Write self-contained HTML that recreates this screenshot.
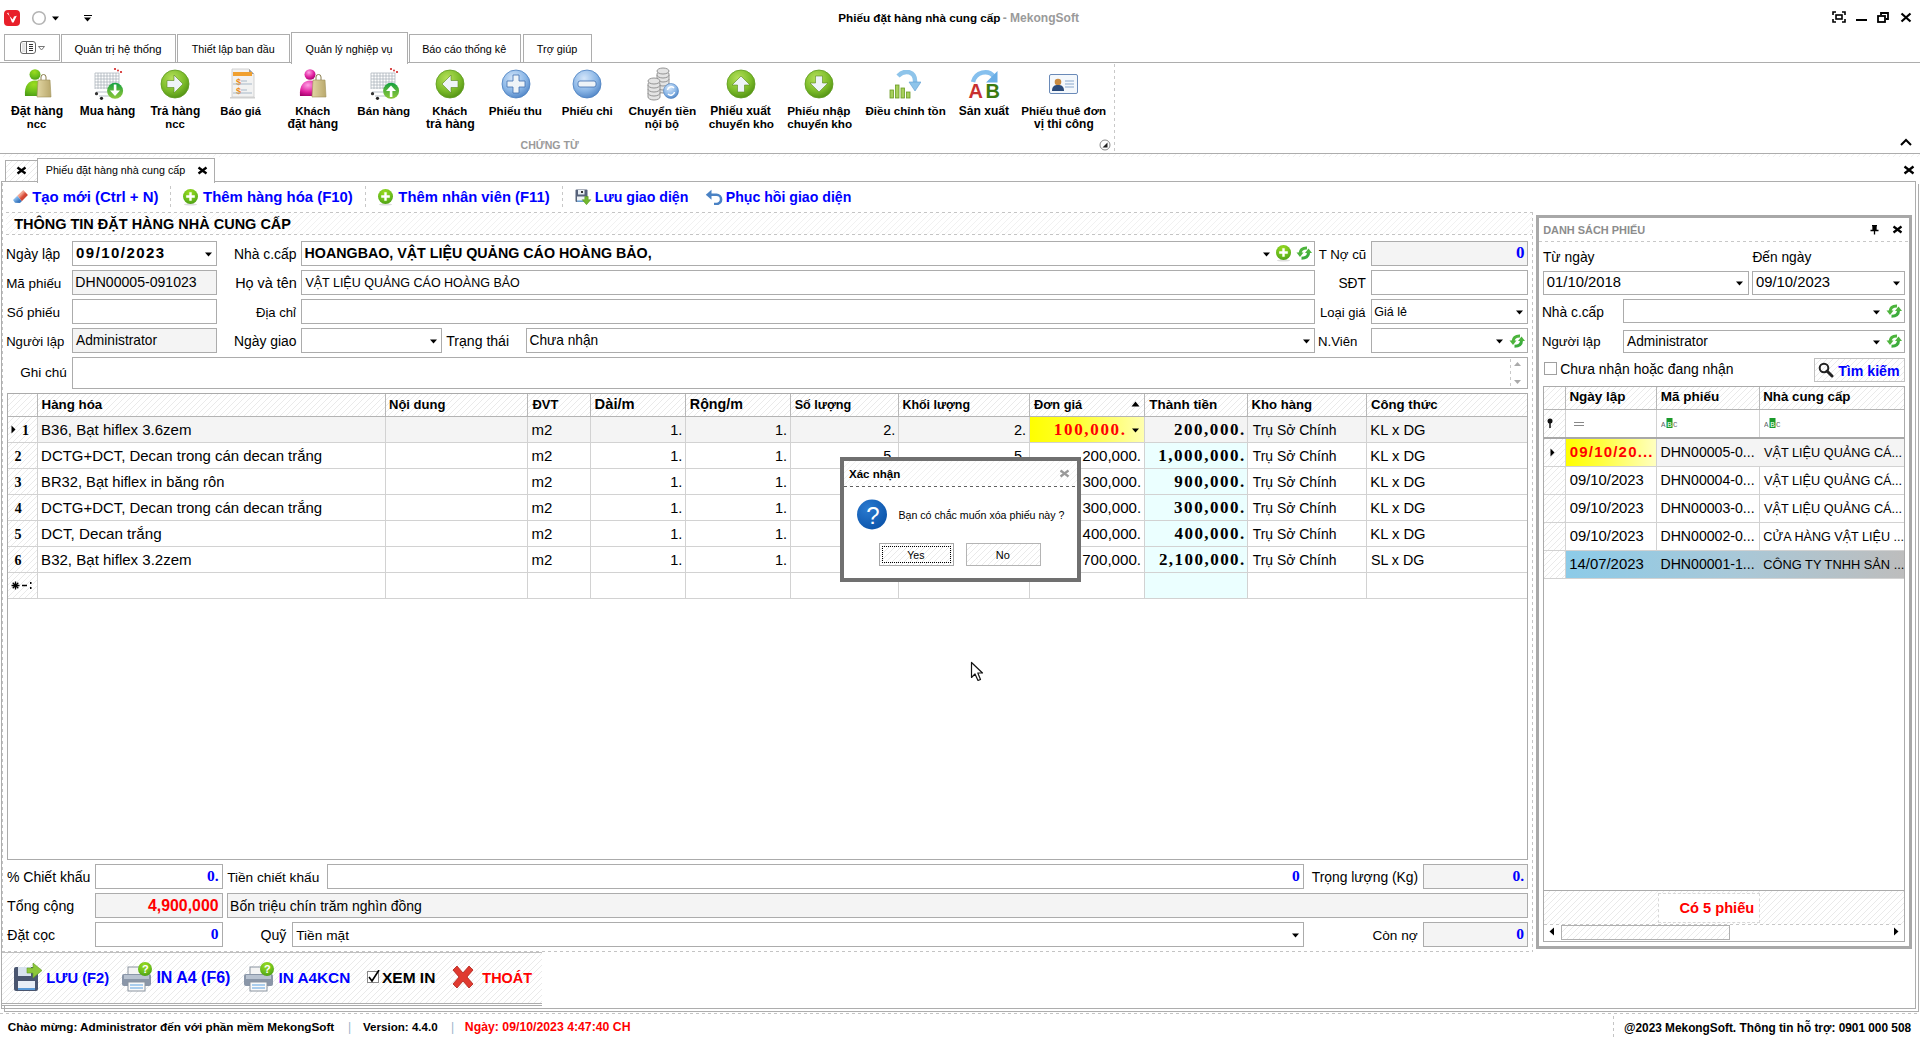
<!DOCTYPE html>
<html><head><meta charset="utf-8"><style>
html,body{margin:0;padding:0;width:1920px;height:1039px;overflow:hidden;background:#fff;}
.a{position:absolute;box-sizing:border-box;}
.t{position:absolute;white-space:pre;line-height:1;font-family:"Liberation Sans", sans-serif;}
</style></head><body>
<svg class="a" style="left:4px;top:10px;" width="16" height="16" viewBox="0 0 16 16"><rect x="0" y="0" width="16" height="16" rx="4" fill="#e8202a"/><path d="M3 3.2 L4.2 2.6 L8 12.5 L9.6 12.5 L12.8 5.8 L10 6.6 L8.7 9.6 Z" fill="#fff"/></svg>
<svg class="a" style="left:31px;top:10px;" width="17" height="17" viewBox="0 0 17 17"><circle cx="8" cy="8" r="6.3" fill="none" stroke="#b4b4b4" stroke-width="1.6"/></svg>
<svg class="a" style="left:52.0px;top:16px" width="7" height="5" viewBox="0 0 7 5"><path d="M0 0.5H7L3.5 4.5Z" fill="#000"/></svg>
<div class="a" style="left:84px;top:15px;width:8px;height:1px;background:#000;"></div>
<svg class="a" style="left:84.0px;top:17px" width="7" height="5" viewBox="0 0 7 5"><path d="M0 0.5H7L3.5 4.5Z" fill="#000"/></svg>
<svg class="a" style="left:1832px;top:11px;" width="14" height="12" viewBox="0 0 14 12"><path d="M1 4V1h3M10 1h3v3M13 8v3h-3M4 11H1V8" fill="none" stroke="#000" stroke-width="1.6"/><rect x="4" y="4" width="6" height="4" fill="none" stroke="#000" stroke-width="1.6"/></svg>
<div class="a" style="left:1856px;top:19px;width:11px;height:2px;background:#000;"></div>
<svg class="a" style="left:1877px;top:12px;" width="12" height="11" viewBox="0 0 12 11"><rect x="1" y="4" width="7" height="6" fill="none" stroke="#000" stroke-width="1.8"/><path d="M4 3V1h7v6H9" fill="none" stroke="#000" stroke-width="1.8"/></svg>
<svg class="a" style="left:1900px;top:12px;" width="12" height="11" viewBox="0 0 12 11"><path d="M1.5 1.5L10.5 9.5M10.5 1.5L1.5 9.5" stroke="#000" stroke-width="2.2"/></svg>
<div class="a" style="left:4px;top:34px;width:56px;height:27px;border:1px solid #adadad;"></div>
<svg class="a" style="left:20px;top:41px;" width="26" height="14" viewBox="0 0 26 14"><rect x="0.5" y="0.5" width="15" height="12" rx="2.5" fill="#fff" stroke="#666"/><rect x="2" y="2" width="3.5" height="9" fill="#e4e4e4"/><line x1="6.5" y1="1" x2="6.5" y2="12" stroke="#666"/><path d="M9 3.5h4M9 5.5h4M9 7.5h4M9 9.5h4" stroke="#333" stroke-width="1"/><path d="M18.5 5.5h6l-3 3.5z" fill="none" stroke="#777"/></svg>
<div class="a" style="left:0px;top:62px;width:291px;height:1px;background:#adadad;"></div>
<div class="a" style="left:408px;top:62px;width:1512px;height:1px;background:#adadad;"></div>
<div class="a" style="left:61px;top:34px;width:115px;height:29px;border:1px solid #adadad;border-bottom:none;"></div>
<div class="a" style="left:177px;top:34px;width:113px;height:29px;border:1px solid #adadad;border-bottom:none;"></div>
<div class="a" style="left:409px;top:34px;width:112px;height:29px;border:1px solid #adadad;border-bottom:none;"></div>
<div class="a" style="left:523px;top:34px;width:69px;height:29px;border:1px solid #adadad;border-bottom:none;"></div>
<div class="a" style="left:291px;top:32px;width:117px;height:32px;background:#fff;border:1px solid #adadad;border-bottom:none;"></div>
<svg width="0" height="0" style="position:absolute"><defs>
<radialGradient id="gG" cx="40%" cy="30%" r="75%"><stop offset="0" stop-color="#b5e05a"/><stop offset="0.6" stop-color="#7cbc2a"/><stop offset="1" stop-color="#4f8e12"/></radialGradient>
<radialGradient id="gB" cx="40%" cy="30%" r="75%"><stop offset="0" stop-color="#d4e6fa"/><stop offset="0.6" stop-color="#8ab6e6"/><stop offset="1" stop-color="#4d82c4"/></radialGradient>
<radialGradient id="gGreenP" cx="45%" cy="25%" r="80%"><stop offset="0" stop-color="#9cdc20"/><stop offset="0.6" stop-color="#6cbe1c"/><stop offset="1" stop-color="#4a9a14"/></radialGradient>
<radialGradient id="gPink" cx="40%" cy="30%" r="75%"><stop offset="0" stop-color="#ffa0e6"/><stop offset="0.6" stop-color="#e0209e"/><stop offset="1" stop-color="#a0006a"/></radialGradient>
<linearGradient id="gBag" x1="0" y1="0" x2="1" y2="0"><stop offset="0" stop-color="#e2d6a4"/><stop offset="1" stop-color="#b9a86c"/></linearGradient>
<linearGradient id="gCart" x1="0" y1="0" x2="0" y2="1"><stop offset="0" stop-color="#10a040"/><stop offset="0.5" stop-color="#5ab43a"/><stop offset="1" stop-color="#8cc83a"/></linearGradient>
<linearGradient id="gCyan" x1="0" y1="0" x2="1" y2="0"><stop offset="0" stop-color="#ffff00"/><stop offset="1" stop-color="#ffffc0"/></linearGradient>
</defs></svg>
<svg class="a" style="left:24px;top:69px;" width="28" height="29" viewBox="0 0 28 29"><ellipse cx="11" cy="5.5" rx="5.5" ry="5.2" fill="url(#gGreenP)"/>
<path d="M1 27 C0 16 5 11.5 11 11.5 C17 11.5 21 16 21 27 Z" fill="url(#gGreenP)"/>
<path d="M14 11h12l1 17H13z" fill="url(#gBag)" stroke="#a0925a" stroke-width="0.6"/>
<path d="M17 11 v-3 a2.5 2.5 0 0 1 5 0 v3" fill="none" stroke="#8a7c4c" stroke-width="1"/></svg>
<svg class="a" style="left:94px;top:66px;" width="30" height="34" viewBox="0 0 30 34"><g fill="none" stroke="#a4aeb6" stroke-width="0.7"><path d="M1 7V23"/><path d="M4 7V23"/><path d="M7 7V23"/><path d="M10 7V23"/><path d="M13 7V23"/><path d="M16 7V23"/><path d="M19 7V23"/><path d="M22 7V23"/><path d="M25 7V23"/><path d="M1 7H25"/><path d="M1 10H25"/><path d="M1 13H25"/><path d="M1 16H25"/><path d="M1 19H25"/><path d="M1 22H25"/></g><path d="M2 26h12M5 30h10" stroke="#b8c0c8" stroke-width="1"/><circle cx="2.5" cy="27.7" r="1.6" fill="#333"/><circle cx="7.5" cy="32.3" r="1.6" fill="#222"/><circle cx="21" cy="3" r="1.1" fill="#d02020"/><circle cx="24" cy="4.5" r="0.9" fill="#d02020"/><circle cx="27" cy="6" r="1.1" fill="#d02020"/><circle cx="21.1" cy="24.8" r="8" fill="url(#gCart)"/><path d="M19.8 18.5h2.6v6h3.6l-5 5.5-5-5.5h3.8z" fill="#fff"/></svg>
<svg class="a" style="left:160px;top:69px;" width="30" height="30" viewBox="0 0 30 30"><circle cx="15" cy="15" r="14" fill="url(#gG)" stroke="#5e9a1e" stroke-width="0.8"/><path d="M7 11.5h7v-5.5l9 9-9 9v-5.5h-7z" fill="#eef4f8" stroke="#58861e" stroke-width="0.6"/></svg>
<svg class="a" style="left:230px;top:68px;" width="25" height="31" viewBox="0 0 25 31"><path d="M2 1h17l5 5v23H2z" fill="#f2f2f2" stroke="#c8c8c8" stroke-width="0.8"/>
<path d="M19 1v5h5z" fill="#9a9a9a"/><rect x="3" y="4" width="19" height="4" fill="#f0a030"/>
<text x="6" y="17" font-size="9" font-family="Liberation Sans" font-weight="bold" fill="#f08a10">$</text>
<text x="6" y="26" font-size="9" font-family="Liberation Sans" font-weight="bold" fill="#f08a10">$</text>
<path d="M11 13h6M3 16h19M11 22h6M3 25h19" stroke="#a8b8c8" stroke-width="1"/>
<rect x="0" y="29" width="25" height="1.5" fill="#d0d0d0"/></svg>
<svg class="a" style="left:299px;top:69px;" width="28" height="29" viewBox="0 0 28 29"><ellipse cx="11" cy="5.5" rx="5.5" ry="5.2" fill="url(#gPink)"/>
<path d="M1 27 C0 16 5 11.5 11 11.5 C17 11.5 21 16 21 27 Z" fill="url(#gPink)"/>
<path d="M14 11h12l1 17H13z" fill="url(#gBag)" stroke="#a0925a" stroke-width="0.6"/>
<path d="M17 11 v-3 a2.5 2.5 0 0 1 5 0 v3" fill="none" stroke="#8a7c4c" stroke-width="1"/></svg>
<svg class="a" style="left:370px;top:66px;" width="30" height="34" viewBox="0 0 30 34"><g fill="none" stroke="#a4aeb6" stroke-width="0.7"><path d="M1 7V23"/><path d="M4 7V23"/><path d="M7 7V23"/><path d="M10 7V23"/><path d="M13 7V23"/><path d="M16 7V23"/><path d="M19 7V23"/><path d="M22 7V23"/><path d="M25 7V23"/><path d="M1 7H25"/><path d="M1 10H25"/><path d="M1 13H25"/><path d="M1 16H25"/><path d="M1 19H25"/><path d="M1 22H25"/></g><path d="M2 26h12M5 30h10" stroke="#b8c0c8" stroke-width="1"/><circle cx="2.5" cy="27.7" r="1.6" fill="#333"/><circle cx="7.5" cy="32.3" r="1.6" fill="#222"/><circle cx="21" cy="3" r="1.1" fill="#d02020"/><circle cx="24" cy="4.5" r="0.9" fill="#d02020"/><circle cx="27" cy="6" r="1.1" fill="#d02020"/><circle cx="21.1" cy="24.8" r="8" fill="url(#gCart)"/><path d="M19.8 31h2.6v-6h3.6l-5-5.5-5 5.5h3.8z" fill="#fff"/></svg>
<svg class="a" style="left:435px;top:69px;" width="30" height="30" viewBox="0 0 30 30"><circle cx="15" cy="15" r="14" fill="url(#gG)" stroke="#5e9a1e" stroke-width="0.8"/><path d="M23 11.5h-7v-5.5l-9 9 9 9v-5.5h7z" fill="#eef4f8" stroke="#58861e" stroke-width="0.6"/></svg>
<svg class="a" style="left:501px;top:69px;" width="30" height="30" viewBox="0 0 30 30"><circle cx="15" cy="15" r="14" fill="url(#gB)" stroke="#4a7fbf" stroke-width="0.8"/><path d="M12 6h6v6h6v6h-6v6h-6v-6h-6v-6h6z" fill="#eef4f8" stroke="#3f6fae" stroke-width="0.8"/></svg>
<svg class="a" style="left:572px;top:69px;" width="30" height="30" viewBox="0 0 30 30"><circle cx="15" cy="15" r="14" fill="url(#gB)" stroke="#4a7fbf" stroke-width="0.8"/><rect x="6" y="12" width="18" height="6" rx="2" fill="#eef4f8" stroke="#3f6fae" stroke-width="0.8"/></svg>
<svg class="a" style="left:646px;top:67px;" width="33" height="34" viewBox="0 0 33 34"><g fill="#e4e4e4" stroke="#8a8a8a" stroke-width="0.9">
<rect x="11" y="4" width="12" height="22" rx="6" ry="3"/><path d="M11 8a6 3 0 0 0 12 0M11 12a6 3 0 0 0 12 0M11 16a6 3 0 0 0 12 0M11 20a6 3 0 0 0 12 0"/>
<ellipse cx="17" cy="4" rx="6" ry="3"/>
<rect x="2" y="14" width="12" height="19" rx="6" ry="3"/><path d="M2 18a6 3 0 0 0 12 0M2 22a6 3 0 0 0 12 0M2 26a6 3 0 0 0 12 0"/>
<ellipse cx="8" cy="14" rx="6" ry="3"/></g>
<circle cx="25" cy="24" r="7.5" fill="url(#gB)" stroke="#4a7fbf" stroke-width="0.6"/>
<path d="M21.5 23a3.8 3.8 0 0 1 6.5-2M28.5 25a3.8 3.8 0 0 1-6.5 2" fill="none" stroke="#fff" stroke-width="1.5"/></svg>
<svg class="a" style="left:726px;top:69px;" width="30" height="30" viewBox="0 0 30 30"><circle cx="15" cy="15" r="14" fill="url(#gG)" stroke="#5e9a1e" stroke-width="0.8"/><path d="M11.5 23v-7h-5.5l9-9 9 9h-5.5v7z" fill="#eef4f8" stroke="#58861e" stroke-width="0.6"/></svg>
<svg class="a" style="left:804px;top:69px;" width="30" height="30" viewBox="0 0 30 30"><circle cx="15" cy="15" r="14" fill="url(#gG)" stroke="#5e9a1e" stroke-width="0.8"/><path d="M11.5 7v7h-5.5l9 9 9-9h-5.5v-7z" fill="#eef4f8" stroke="#58861e" stroke-width="0.6"/></svg>
<svg class="a" style="left:889px;top:70px;" width="32" height="29" viewBox="0 0 32 29"><g fill="#a6d05a" stroke="#6a9a24" stroke-width="0.8"><rect x="1" y="20" width="3.5" height="8"/><rect x="6.5" y="15" width="3.5" height="13"/><rect x="12" y="18" width="3.5" height="10"/><rect x="17.5" y="22" width="3.5" height="6"/></g>
<path d="M9 6 C16 -1 27 1 26 13" fill="none" stroke="#8ec4ea" stroke-width="4.5"/>
<path d="M20 12h12l-6 9z" fill="#8ec4ea" stroke="#5a9ad0" stroke-width="0.6"/></svg>
<svg class="a" style="left:967px;top:68px;" width="35" height="32" viewBox="0 0 35 32"><path d="M6 14 C8.5 4 21 1 27 8.5" fill="none" stroke="#86c0ee" stroke-width="4.5"/><path d="M30.5 3 L30.5 14.5 L19 14.5 Z" fill="#6aaee6"/>
<text x="1.5" y="30" font-size="20" font-family="Liberation Sans" font-weight="bold" fill="#c83030">A</text>
<text x="18.5" y="30" font-size="20" font-family="Liberation Sans" font-weight="bold" fill="#3a7a10">B</text></svg>
<svg class="a" style="left:1049px;top:74px;" width="30" height="21" viewBox="0 0 30 21"><rect x="0.5" y="0.5" width="28" height="19" rx="1.5" fill="#f4f8fc" stroke="#6a8ab8" stroke-width="1"/>
<circle cx="9" cy="8" r="3.3" fill="#c88a40"/><path d="M3 17c0-5 2.5-6 6-6s6 1 6 6z" fill="#2a4a7a"/>
<path d="M16 7h9M16 10h9M16 13h9" stroke="#8aa8cc" stroke-width="1"/></svg>
<div class="a" style="left:1114px;top:64px;width:1px;height:89px;background:repeating-linear-gradient(180deg,#c8c8c8 0 3px,transparent 3px 6px);"></div>
<svg class="a" style="left:1099px;top:139px;" width="12" height="12" viewBox="0 0 12 12"><circle cx="6" cy="6" r="5" fill="#fff" stroke="#8a8a8a"/><path d="M3.5 8.5h5v-5z" fill="#222"/></svg>
<svg class="a" style="left:1899px;top:138px;" width="14" height="10" viewBox="0 0 14 10"><path d="M2 7l5-5 5 5" fill="none" stroke="#000" stroke-width="2"/></svg>
<div class="a" style="left:0px;top:153px;width:1920px;height:1px;background:#adadad;"></div>
<div class="a" style="left:0px;top:154px;width:1920px;height:3px;background:repeating-linear-gradient(135deg,#ffffff 0px,#ffffff 3.536px,#f1f1f1 3.536px,#f1f1f1 4.243px);"></div>
<div class="a" style="left:5px;top:160px;width:33px;height:22px;background:repeating-linear-gradient(135deg,#ffffff 0px,#ffffff 3.536px,#eaeaea 3.536px,#eaeaea 4.243px);border:1px solid #adadad;"></div>
<svg class="a" style="left:16px;top:166px;" width="11" height="9" viewBox="0 0 11 9"><path d="M1.5 1.5L9.5 7.5M9.5 1.5L1.5 7.5" stroke="#000" stroke-width="2.3"/></svg>
<div class="a" style="left:37px;top:158px;width:178px;height:25px;background:#fff;border:1px solid #adadad;border-bottom:none;"></div>
<svg class="a" style="left:197px;top:166px;" width="11" height="9" viewBox="0 0 11 9"><path d="M1.5 1.5L9.5 7.5M9.5 1.5L1.5 7.5" stroke="#000" stroke-width="2.3"/></svg>
<svg class="a" style="left:1903px;top:165px;" width="12" height="10" viewBox="0 0 12 10"><path d="M1.5 1.5L10.5 8.5M10.5 1.5L1.5 8.5" stroke="#000" stroke-width="2.3"/></svg>
<div class="a" style="left:1px;top:181px;width:5px;height:1px;background:#adadad;"></div>
<div class="a" style="left:214px;top:181px;width:1702px;height:1px;background:#adadad;"></div>
<div class="a" style="left:1px;top:181px;width:1px;height:828px;background:#adadad;"></div>
<div class="a" style="left:1915px;top:181px;width:1px;height:828px;background:#adadad;"></div>
<div class="a" style="left:1px;top:1008px;width:1915px;height:1px;background:#adadad;"></div>
<div class="a" style="left:1918px;top:184px;width:1px;height:828px;background:#adadad;"></div>
<div class="a" style="left:4px;top:1011px;width:1915px;height:1px;background:#adadad;"></div>
<div class="a" style="left:4px;top:1005px;width:1px;height:7px;background:#adadad;"></div>
<svg class="a" style="left:12px;top:189px;" width="18" height="16" viewBox="0 0 18 16"><defs><linearGradient id="gEr" x1="0" y1="0" x2="1" y2="1"><stop offset="0.35" stop-color="#f2a894"/><stop offset="0.55" stop-color="#d84a36"/><stop offset="1" stop-color="#b83020"/></linearGradient><linearGradient id="gEb" x1="0" y1="0" x2="1" y2="1"><stop offset="0.3" stop-color="#8cc0f0"/><stop offset="0.7" stop-color="#3a78c0"/></linearGradient></defs><path d="M11.3 1 L15.9 5.9 L9.8 12.3 L5.3 6.7 Z" fill="url(#gEr)"/><path d="M5.3 6.7 L9.8 12.3 L7.9 14 L3 13.7 L1 11 Z" fill="url(#gEb)"/></svg>
<div class="a" style="left:170px;top:186px;width:1px;height:23px;background:repeating-linear-gradient(180deg,#c8c8c8 0 3px,transparent 3px 6px);"></div>
<svg class="a" style="left:183px;top:189px;" width="16" height="17" viewBox="0 0 16 17"><ellipse cx="7.5" cy="15.5" rx="6.5" ry="1" fill="#ddd"/><circle cx="7.5" cy="7.5" r="7.5" fill="url(#gGreenP)"/><path d="M6.3 3.2h2.4v3.1h3.1v2.4h-3.1v3.1h-2.4v-3.1h-3.1v-2.4h3.1z" fill="#fff"/></svg>
<div class="a" style="left:365px;top:186px;width:1px;height:23px;background:repeating-linear-gradient(180deg,#c8c8c8 0 3px,transparent 3px 6px);"></div>
<svg class="a" style="left:378px;top:189px;" width="16" height="17" viewBox="0 0 16 17"><ellipse cx="7.5" cy="15.5" rx="6.5" ry="1" fill="#ddd"/><circle cx="7.5" cy="7.5" r="7.5" fill="url(#gGreenP)"/><path d="M6.3 3.2h2.4v3.1h3.1v2.4h-3.1v3.1h-2.4v-3.1h-3.1v-2.4h3.1z" fill="#fff"/></svg>
<div class="a" style="left:562px;top:186px;width:1px;height:23px;background:repeating-linear-gradient(180deg,#c8c8c8 0 3px,transparent 3px 6px);"></div>
<svg class="a" style="left:575px;top:189px;" width="17" height="16" viewBox="0 0 17 16"><rect x="0.5" y="0.5" width="12" height="12.5" rx="1" fill="#56627a"/><rect x="3" y="1" width="6.5" height="4.5" fill="#e8eef4"/><rect x="6" y="2" width="2" height="2" fill="#333"/><rect x="2" y="7.5" width="9" height="5" fill="#eef2f6"/><rect x="2" y="11.5" width="9" height="1.2" fill="#5a9ad8"/><path d="M9.8 7.5h3.4v3.2h2.6l-4.3 5-4.3-5h2.6z" fill="#72b82e" stroke="#4e8e1a" stroke-width="0.5"/></svg>
<svg class="a" style="left:705px;top:189px;" width="18" height="16" viewBox="0 0 18 16"><path d="M0.8 5.8 L6.5 0.8 L6.5 10.8 Z" fill="#4a82c4"/><path d="M5.5 5.8 H11.5 A4.6 4.6 0 0 1 11.5 15 H9" fill="none" stroke="#4a82c4" stroke-width="2.6"/></svg>
<div class="a" style="left:6px;top:213px;width:1526px;height:21px;background:repeating-linear-gradient(135deg,#ffffff 0px,#ffffff 3.536px,#f1f1f1 3.536px,#f1f1f1 4.243px);"></div>
<div class="a" style="left:6px;top:212px;width:1526px;height:1px;background:repeating-linear-gradient(90deg,#c4c4c4 0 3px,transparent 3px 6px);"></div>
<div class="a" style="left:6px;top:234px;width:1526px;height:1px;background:repeating-linear-gradient(90deg,#c4c4c4 0 3px,transparent 3px 6px);"></div>
<div class="a" style="left:1532px;top:212px;width:1px;height:740px;background:repeating-linear-gradient(180deg,#c4c4c4 0 3px,transparent 3px 6px);"></div>
<div class="a" style="left:2px;top:183px;width:1px;height:769px;background:repeating-linear-gradient(180deg,#c4c4c4 0 3px,transparent 3px 6px);"></div>
<div class="a" style="left:72px;top:241px;width:145px;height:25px;background:#fff;border:1px solid #acacac;"></div>
<svg class="a" style="left:205.0px;top:252px" width="7" height="5" viewBox="0 0 7 5"><path d="M0 0.5H7L3.5 4.5Z" fill="#000"/></svg>
<div class="a" style="left:72px;top:270px;width:145px;height:25px;background:#f4f4f4;border:1px solid #acacac;"></div>
<div class="a" style="left:72px;top:299px;width:145px;height:25px;background:#fff;border:1px solid #acacac;"></div>
<div class="a" style="left:72px;top:328px;width:145px;height:25px;background:#f4f4f4;border:1px solid #acacac;"></div>
<div class="a" style="left:72px;top:357px;width:1456px;height:32px;background:#fff;border:1px solid #acacac;"></div>
<div class="a" style="left:1510px;top:359px;width:1px;height:28px;background:repeating-linear-gradient(180deg,#c8c8c8 0 3px,transparent 3px 6px);"></div>
<svg class="a" style="left:1513px;top:361px;" width="9" height="24" viewBox="0 0 9 24"><path d="M1 5h7l-3.5-4z" fill="#aaa"/><path d="M1 19h7l-3.5 4z" fill="#aaa"/></svg>
<div class="a" style="left:301px;top:241px;width:1014px;height:25px;background:#fff;border:1px solid #acacac;"></div>
<svg class="a" style="left:1262.5px;top:252px" width="7" height="5" viewBox="0 0 7 5"><path d="M0 0.5H7L3.5 4.5Z" fill="#000"/></svg>
<svg class="a" style="left:1276px;top:245px;" width="16" height="17" viewBox="0 0 16 17"><ellipse cx="7.5" cy="15.5" rx="6.5" ry="1" fill="#ddd"/><circle cx="7.5" cy="7.5" r="7.5" fill="url(#gGreenP)"/><path d="M6.3 3.2h2.4v3.1h3.1v2.4h-3.1v3.1h-2.4v-3.1h-3.1v-2.4h3.1z" fill="#fff"/></svg>
<svg class="a" style="left:1296px;top:246px;" width="17" height="14" viewBox="0 0 17 14"><path d="M11 2 Q4.5 1.8 4 7.5" fill="none" stroke="#4cb43c" stroke-width="3"/><path d="M0.5 6.5h7l-3.5 4.5z" fill="#4cb43c"/><path d="M12.5 6.5 Q12.5 12.2 5.5 12.2" fill="none" stroke="#3cac3c" stroke-width="3"/><path d="M9 7h7l-3.5-4.5z" fill="#4cb43c"/></svg>
<div class="a" style="left:301px;top:270px;width:1014px;height:25px;background:#fff;border:1px solid #acacac;"></div>
<div class="a" style="left:301px;top:299px;width:1014px;height:25px;background:#fff;border:1px solid #acacac;"></div>
<div class="a" style="left:301px;top:328px;width:141px;height:25px;background:#fff;border:1px solid #acacac;"></div>
<svg class="a" style="left:430.0px;top:339px" width="7" height="5" viewBox="0 0 7 5"><path d="M0 0.5H7L3.5 4.5Z" fill="#000"/></svg>
<div class="a" style="left:526px;top:328px;width:789px;height:25px;background:#fff;border:1px solid #acacac;"></div>
<svg class="a" style="left:1302.5px;top:339px" width="7" height="5" viewBox="0 0 7 5"><path d="M0 0.5H7L3.5 4.5Z" fill="#000"/></svg>
<div class="a" style="left:1371px;top:241px;width:157px;height:25px;background:#f4f4f4;border:1px solid #acacac;"></div>
<div class="a" style="left:1371px;top:270px;width:157px;height:25px;background:#fff;border:1px solid #acacac;"></div>
<div class="a" style="left:1371px;top:299px;width:157px;height:25px;background:#fff;border:1px solid #acacac;"></div>
<svg class="a" style="left:1516.0px;top:310px" width="7" height="5" viewBox="0 0 7 5"><path d="M0 0.5H7L3.5 4.5Z" fill="#000"/></svg>
<div class="a" style="left:1371px;top:328px;width:157px;height:25px;background:#fff;border:1px solid #acacac;"></div>
<svg class="a" style="left:1496.0px;top:339px" width="7" height="5" viewBox="0 0 7 5"><path d="M0 0.5H7L3.5 4.5Z" fill="#000"/></svg>
<svg class="a" style="left:1509px;top:334px;" width="17" height="14" viewBox="0 0 17 14"><path d="M11 2 Q4.5 1.8 4 7.5" fill="none" stroke="#4cb43c" stroke-width="3"/><path d="M0.5 6.5h7l-3.5 4.5z" fill="#4cb43c"/><path d="M12.5 6.5 Q12.5 12.2 5.5 12.2" fill="none" stroke="#3cac3c" stroke-width="3"/><path d="M9 7h7l-3.5-4.5z" fill="#4cb43c"/></svg>
<div class="a" style="left:7px;top:393px;width:1521px;height:467px;background:#fff;border:1px solid #ababab;"></div>
<div class="a" style="left:8px;top:394px;width:1519px;height:22px;background:repeating-linear-gradient(135deg,#ffffff 0px,#ffffff 3.536px,#eaeaea 3.536px,#eaeaea 4.243px);"></div>
<div class="a" style="left:8px;top:417px;width:29px;height:182px;background:repeating-linear-gradient(135deg,#ffffff 0px,#ffffff 3.536px,#eaeaea 3.536px,#eaeaea 4.243px);"></div>
<div class="a" style="left:38px;top:417px;width:1489px;height:25px;background:#f4f4f4;"></div>
<div class="a" style="left:1145px;top:443px;width:102px;height:156px;background:#ebffff;"></div>
<div class="a" style="left:1030px;top:417px;width:114px;height:25px;background:linear-gradient(90deg,#ffff00 0%,#ffff30 40%,#ffffb0 100%);"></div>
<div class="a" style="left:37px;top:394px;width:1px;height:22px;background:#b8b8b8;"></div>
<div class="a" style="left:37px;top:417px;width:1px;height:182px;background:#d2d2d2;"></div>
<div class="a" style="left:385px;top:394px;width:1px;height:22px;background:#b8b8b8;"></div>
<div class="a" style="left:385px;top:417px;width:1px;height:182px;background:#d2d2d2;"></div>
<div class="a" style="left:527px;top:394px;width:1px;height:22px;background:#b8b8b8;"></div>
<div class="a" style="left:527px;top:417px;width:1px;height:182px;background:#d2d2d2;"></div>
<div class="a" style="left:590px;top:394px;width:1px;height:22px;background:#b8b8b8;"></div>
<div class="a" style="left:590px;top:417px;width:1px;height:182px;background:#d2d2d2;"></div>
<div class="a" style="left:685px;top:394px;width:1px;height:22px;background:#b8b8b8;"></div>
<div class="a" style="left:685px;top:417px;width:1px;height:182px;background:#d2d2d2;"></div>
<div class="a" style="left:790px;top:394px;width:1px;height:22px;background:#b8b8b8;"></div>
<div class="a" style="left:790px;top:417px;width:1px;height:182px;background:#d2d2d2;"></div>
<div class="a" style="left:898px;top:394px;width:1px;height:22px;background:#b8b8b8;"></div>
<div class="a" style="left:898px;top:417px;width:1px;height:182px;background:#d2d2d2;"></div>
<div class="a" style="left:1029px;top:394px;width:1px;height:22px;background:#b8b8b8;"></div>
<div class="a" style="left:1029px;top:417px;width:1px;height:182px;background:#d2d2d2;"></div>
<div class="a" style="left:1144px;top:394px;width:1px;height:22px;background:#b8b8b8;"></div>
<div class="a" style="left:1144px;top:417px;width:1px;height:182px;background:#d2d2d2;"></div>
<div class="a" style="left:1247px;top:394px;width:1px;height:22px;background:#b8b8b8;"></div>
<div class="a" style="left:1247px;top:417px;width:1px;height:182px;background:#d2d2d2;"></div>
<div class="a" style="left:1366px;top:394px;width:1px;height:22px;background:#b8b8b8;"></div>
<div class="a" style="left:1366px;top:417px;width:1px;height:182px;background:#d2d2d2;"></div>
<div class="a" style="left:8px;top:416px;width:1519px;height:1px;background:#b4b4b4;"></div>
<div class="a" style="left:8px;top:442px;width:1519px;height:1px;background:#d2d2d2;"></div>
<div class="a" style="left:8px;top:468px;width:1519px;height:1px;background:#d2d2d2;"></div>
<div class="a" style="left:8px;top:494px;width:1519px;height:1px;background:#d2d2d2;"></div>
<div class="a" style="left:8px;top:520px;width:1519px;height:1px;background:#d2d2d2;"></div>
<div class="a" style="left:8px;top:546px;width:1519px;height:1px;background:#d2d2d2;"></div>
<div class="a" style="left:8px;top:572px;width:1519px;height:1px;background:#d2d2d2;"></div>
<div class="a" style="left:8px;top:598px;width:1519px;height:1px;background:#d2d2d2;"></div>
<svg class="a" style="left:1131px;top:401px;" width="9" height="6" viewBox="0 0 9 6"><path d="M0.5 5.5h8l-4-5z" fill="#000"/></svg>
<svg class="a" style="left:1132.0px;top:428px" width="7" height="5" viewBox="0 0 7 5"><path d="M0 0.5H7L3.5 4.5Z" fill="#000"/></svg>
<svg class="a" style="left:11px;top:425px;" width="5" height="9" viewBox="0 0 5 9"><path d="M0.5 0.5v8l4-4z" fill="#000"/></svg>
<svg class="a" style="left:11px;top:581px;" width="25" height="10" viewBox="0 0 25 10"><path d="M4.5 0.5v8M0.5 4.5h8M1.7 1.7l5.6 5.6M7.3 1.7l-5.6 5.6" stroke="#000" stroke-width="1.3"/><path d="M11 4.5h5" stroke="#000" stroke-width="1.5"/><rect x="19" y="1" width="1.5" height="2" fill="#000"/><rect x="19" y="6" width="1.5" height="2" fill="#000"/></svg>
<div class="a" style="left:95px;top:864px;width:128px;height:25px;background:#fff;border:1px solid #acacac;"></div>
<div class="a" style="left:327px;top:864px;width:977px;height:25px;background:#fff;border:1px solid #acacac;"></div>
<div class="a" style="left:1423px;top:864px;width:105px;height:25px;background:#f4f4f4;border:1px solid #acacac;"></div>
<div class="a" style="left:95px;top:893px;width:128px;height:25px;background:#f4f4f4;border:1px solid #acacac;"></div>
<div class="a" style="left:227px;top:893px;width:1301px;height:25px;background:#f4f4f4;border:1px solid #acacac;"></div>
<div class="a" style="left:95px;top:922px;width:128px;height:25px;background:#fff;border:1px solid #acacac;"></div>
<div class="a" style="left:292px;top:922px;width:1012px;height:25px;background:#fff;border:1px solid #acacac;"></div>
<svg class="a" style="left:1291.5px;top:933px" width="7" height="5" viewBox="0 0 7 5"><path d="M0 0.5H7L3.5 4.5Z" fill="#000"/></svg>
<div class="a" style="left:1423px;top:922px;width:105px;height:25px;background:#f4f4f4;border:1px solid #acacac;"></div>
<div class="a" style="left:2px;top:951px;width:1530px;height:1px;background:repeating-linear-gradient(90deg,#c4c4c4 0 3px,transparent 3px 6px);"></div>
<div class="a" style="left:2px;top:953px;width:540px;height:51px;background:repeating-linear-gradient(135deg,#ffffff 0px,#ffffff 3.536px,#eaeaea 3.536px,#eaeaea 4.243px);"></div>
<div class="a" style="left:2px;top:1003px;width:540px;height:1px;background:#adadad;"></div>
<div class="a" style="left:2px;top:1005px;width:540px;height:1px;background:#adadad;"></div>
<div class="a" style="left:2px;top:952px;width:540px;height:1px;background:#c0c0c0;"></div>
<svg class="a" style="left:13px;top:962px;" width="31" height="30" viewBox="0 0 31 30"><rect x="1" y="5" width="24" height="24" rx="2" fill="#4a5670"/><rect x="5" y="5" width="13" height="9" fill="#d8e2ee"/><rect x="5" y="19" width="17" height="9" fill="#e8eef6"/><rect x="5" y="26" width="17" height="2" fill="#5a9ad8"/><path d="M14 6h6v-5l9 7.5-9 7.5v-5h-6z" fill="#8cc63a" stroke="#5e9a1e" stroke-width="0.6"/></svg>
<svg class="a" style="left:121px;top:961px;" width="32" height="31" viewBox="0 0 32 31"><rect x="7" y="6" width="17" height="9" fill="#f4f4f4" stroke="#8a94a0"/><rect x="1" y="13" width="29" height="12" rx="2" fill="#8a96a8"/><rect x="3" y="14" width="25" height="4" fill="#b8c2d0"/><rect x="7" y="21" width="17" height="9" fill="#fafafa" stroke="#8a94a0"/><path d="M9 24h13M9 27h13" stroke="#5aa0e0"/><circle cx="24" cy="8" r="7" fill="url(#gGreenP)"/><text x="21" y="12" font-size="11" font-family="Liberation Sans" font-weight="bold" fill="#fff">?</text></svg>
<svg class="a" style="left:243px;top:961px;" width="32" height="31" viewBox="0 0 32 31"><rect x="7" y="6" width="17" height="9" fill="#f4f4f4" stroke="#8a94a0"/><rect x="1" y="13" width="29" height="12" rx="2" fill="#8a96a8"/><rect x="3" y="14" width="25" height="4" fill="#b8c2d0"/><rect x="7" y="21" width="17" height="9" fill="#fafafa" stroke="#8a94a0"/><path d="M9 24h13M9 27h13" stroke="#5aa0e0"/><circle cx="24" cy="8" r="7" fill="url(#gGreenP)"/><text x="21" y="12" font-size="11" font-family="Liberation Sans" font-weight="bold" fill="#fff">?</text></svg>
<svg class="a" style="left:367px;top:970px;" width="13" height="14" viewBox="0 0 13 14"><rect x="0.5" y="1.5" width="11" height="11" fill="#fff" stroke="#888"/><path d="M2 7l3 4 7-11" fill="none" stroke="#000" stroke-width="1.6"/></svg>
<svg class="a" style="left:450px;top:964px;" width="26" height="27" viewBox="0 0 26 27"><path d="M3 6 L7 2 L13 9 L19 2 L23 6 L17 13 L23 20 L19 24 L13 17 L7 24 L3 20 L9 13 Z" fill="#e03a30" stroke="#b02018" stroke-width="0.8"/></svg>
<div class="a" style="left:0px;top:1013px;width:1920px;height:1px;background:repeating-linear-gradient(90deg,#c4c4c4 0 3px,transparent 3px 6px);"></div>
<div class="a" style="left:1613px;top:1016px;width:1px;height:21px;background:repeating-linear-gradient(180deg,#c4c4c4 0 3px,transparent 3px 6px);"></div>
<div class="a" style="left:1536px;top:215px;width:376px;height:734px;background:#fff;border:3px solid #a8a8a8;"></div>
<svg class="a" style="left:1870px;top:225px;" width="9" height="10" viewBox="0 0 9 10"><path d="M2 0.5h5M3 0.5v5M6 0.5v5M0.5 5.5h8M4.5 5.5v4" stroke="#000" stroke-width="1.3" fill="none"/><rect x="3" y="1" width="3" height="4.5" fill="#000"/></svg>
<svg class="a" style="left:1892px;top:225px;" width="11" height="9" viewBox="0 0 11 9"><path d="M1.5 1.5L9.5 7.5M9.5 1.5L1.5 7.5" stroke="#000" stroke-width="2.2"/></svg>
<div class="a" style="left:1539px;top:241px;width:370px;height:1px;background:repeating-linear-gradient(90deg,#c8c8c8 0 3px,transparent 3px 6px);"></div>
<div class="a" style="left:1543px;top:271px;width:206px;height:24px;background:#fff;border:1px solid #acacac;"></div>
<svg class="a" style="left:1736.0px;top:281px" width="7" height="5" viewBox="0 0 7 5"><path d="M0 0.5H7L3.5 4.5Z" fill="#000"/></svg>
<div class="a" style="left:1752px;top:271px;width:153px;height:24px;background:#fff;border:1px solid #acacac;"></div>
<svg class="a" style="left:1893.0px;top:281px" width="7" height="5" viewBox="0 0 7 5"><path d="M0 0.5H7L3.5 4.5Z" fill="#000"/></svg>
<div class="a" style="left:1623px;top:299px;width:282px;height:24px;background:#fff;border:1px solid #acacac;"></div>
<svg class="a" style="left:1873.0px;top:310px" width="7" height="5" viewBox="0 0 7 5"><path d="M0 0.5H7L3.5 4.5Z" fill="#000"/></svg>
<svg class="a" style="left:1886px;top:304px;" width="17" height="14" viewBox="0 0 17 14"><path d="M11 2 Q4.5 1.8 4 7.5" fill="none" stroke="#4cb43c" stroke-width="3"/><path d="M0.5 6.5h7l-3.5 4.5z" fill="#4cb43c"/><path d="M12.5 6.5 Q12.5 12.2 5.5 12.2" fill="none" stroke="#3cac3c" stroke-width="3"/><path d="M9 7h7l-3.5-4.5z" fill="#4cb43c"/></svg>
<div class="a" style="left:1623px;top:330px;width:282px;height:23px;background:#fff;border:1px solid #acacac;"></div>
<svg class="a" style="left:1873.0px;top:340px" width="7" height="5" viewBox="0 0 7 5"><path d="M0 0.5H7L3.5 4.5Z" fill="#000"/></svg>
<svg class="a" style="left:1886px;top:334px;" width="17" height="14" viewBox="0 0 17 14"><path d="M11 2 Q4.5 1.8 4 7.5" fill="none" stroke="#4cb43c" stroke-width="3"/><path d="M0.5 6.5h7l-3.5 4.5z" fill="#4cb43c"/><path d="M12.5 6.5 Q12.5 12.2 5.5 12.2" fill="none" stroke="#3cac3c" stroke-width="3"/><path d="M9 7h7l-3.5-4.5z" fill="#4cb43c"/></svg>
<div class="a" style="left:1544px;top:362px;width:13px;height:13px;background:#fff;border:1px solid #a0a0a0;"></div>
<div class="a" style="left:1814px;top:358px;width:91px;height:24px;background:repeating-linear-gradient(135deg,#ffffff 0px,#ffffff 3.536px,#eaeaea 3.536px,#eaeaea 4.243px);border:1px solid #c0c0c0;"></div>
<svg class="a" style="left:1818px;top:362px;" width="16" height="16" viewBox="0 0 16 16"><circle cx="6" cy="6" r="4.3" fill="none" stroke="#222" stroke-width="2"/><path d="M9 9l5 5" stroke="#222" stroke-width="3" stroke-linecap="round"/></svg>
<div class="a" style="left:1543px;top:386px;width:362px;height:556px;background:#fff;border:1px solid #ababab;"></div>
<div class="a" style="left:1544px;top:387px;width:360px;height:22px;background:repeating-linear-gradient(135deg,#ffffff 0px,#ffffff 3.536px,#eaeaea 3.536px,#eaeaea 4.243px);"></div>
<div class="a" style="left:1544px;top:410px;width:21px;height:169px;background:repeating-linear-gradient(135deg,#ffffff 0px,#ffffff 3.536px,#eaeaea 3.536px,#eaeaea 4.243px);"></div>
<div class="a" style="left:1565px;top:387px;width:1px;height:22px;background:#b8b8b8;"></div>
<div class="a" style="left:1565px;top:410px;width:1px;height:169px;background:#d2d2d2;"></div>
<div class="a" style="left:1656px;top:387px;width:1px;height:22px;background:#b8b8b8;"></div>
<div class="a" style="left:1656px;top:410px;width:1px;height:169px;background:#d2d2d2;"></div>
<div class="a" style="left:1759px;top:387px;width:1px;height:22px;background:#b8b8b8;"></div>
<div class="a" style="left:1759px;top:410px;width:1px;height:169px;background:#d2d2d2;"></div>
<div class="a" style="left:1544px;top:409px;width:360px;height:1px;background:#b4b4b4;"></div>
<div class="a" style="left:1544px;top:437px;width:360px;height:2px;background:#a8a8a8;"></div>
<div class="a" style="left:1544px;top:466px;width:360px;height:1px;background:#d2d2d2;"></div>
<div class="a" style="left:1544px;top:494px;width:360px;height:1px;background:#d2d2d2;"></div>
<div class="a" style="left:1544px;top:522px;width:360px;height:1px;background:#d2d2d2;"></div>
<div class="a" style="left:1544px;top:550px;width:360px;height:1px;background:#d2d2d2;"></div>
<div class="a" style="left:1544px;top:578px;width:360px;height:1px;background:#d2d2d2;"></div>
<svg class="a" style="left:1546px;top:418px;" width="8" height="11" viewBox="0 0 8 11"><circle cx="4" cy="3" r="2.5" fill="#111"/><path d="M4 5v5" stroke="#111" stroke-width="1.5"/></svg>
<div class="a" style="left:1574px;top:422px;width:10px;height:1px;background:#888;"></div>
<div class="a" style="left:1574px;top:425px;width:10px;height:1px;background:#888;"></div>
<svg class="a" style="left:1661px;top:418px;" width="17" height="11" viewBox="0 0 17 11"><rect x="5.5" y="0" width="6" height="10" fill="#1a9a2a"/><text x="0" y="8.5" font-size="7.5" font-family="Liberation Mono" fill="#666">A</text><text x="6.3" y="8.5" font-size="7.5" font-family="Liberation Mono" fill="#fff">B</text><text x="12" y="8.5" font-size="7.5" font-family="Liberation Mono" fill="#666">C</text></svg>
<svg class="a" style="left:1764px;top:418px;" width="17" height="11" viewBox="0 0 17 11"><rect x="5.5" y="0" width="6" height="10" fill="#1a9a2a"/><text x="0" y="8.5" font-size="7.5" font-family="Liberation Mono" fill="#666">A</text><text x="6.3" y="8.5" font-size="7.5" font-family="Liberation Mono" fill="#fff">B</text><text x="12" y="8.5" font-size="7.5" font-family="Liberation Mono" fill="#666">C</text></svg>
<div class="a" style="left:1657px;top:439px;width:247px;height:27px;background:#f4f4f4;"></div>
<div class="a" style="left:1566px;top:439px;width:90px;height:27px;background:linear-gradient(90deg,#ffff00 0%,#ffff40 40%,#ffffc0 100%);"></div>
<div class="a" style="left:1566px;top:551px;width:338px;height:27px;background:linear-gradient(90deg,#8ccbe8 0%,#a8c8d8 50%,#bdbdbd 100%);"></div>
<svg class="a" style="left:1550px;top:448px;" width="5" height="9" viewBox="0 0 5 9"><path d="M0.5 0.5v8l4-4z" fill="#000"/></svg>
<div class="a" style="left:1544px;top:890px;width:360px;height:1px;background:#ababab;"></div>
<div class="a" style="left:1544px;top:891px;width:360px;height:33px;background:repeating-linear-gradient(135deg,#ffffff 0px,#ffffff 3.536px,#eaeaea 3.536px,#eaeaea 4.243px);"></div>
<div class="a" style="left:1658px;top:893px;width:102px;height:30px;background:#fff;border:1px solid #d8d8d8;border-style:dashed;"></div>
<div class="a" style="left:1544px;top:924px;width:360px;height:1px;background:repeating-linear-gradient(90deg,#c8c8c8 0 3px,transparent 3px 6px);"></div>
<svg class="a" style="left:1549px;top:927px;" width="6" height="10" viewBox="0 0 6 10"><path d="M5 0.5v8l-4.5-4z" fill="#000"/></svg>
<div class="a" style="left:1561px;top:925px;width:169px;height:15px;background:repeating-linear-gradient(135deg,#ffffff 0px,#ffffff 3.536px,#eaeaea 3.536px,#eaeaea 4.243px);border:1px solid #b0b0b0;"></div>
<svg class="a" style="left:1893px;top:927px;" width="6" height="10" viewBox="0 0 6 10"><path d="M1 0.5v8l4.5-4z" fill="#000"/></svg>
<svg class="a" style="left:0;top:0" width="1920" height="1039" font-family="Liberation Sans" xml:space="preserve"><text x="838.30" y="22" font-size="11.68" fill="#000" font-weight="bold">Phiếu đặt hàng nhà cung cấp</text><text x="1002.64" y="22" font-size="12.06" fill="#9a9a9a" font-weight="bold">- MekongSoft</text><text x="74.55" y="53" font-size="11.27" fill="#000">Quản trị hệ thống</text><text x="191.79" y="53" font-size="10.73" fill="#000">Thiết lập ban đầu</text><text x="422.13" y="53" font-size="10.82" fill="#000">Báo cáo thống kê</text><text x="536.78" y="53" font-size="10.88" fill="#000">Trợ giúp</text><text x="305.57" y="53" font-size="10.81" fill="#000">Quản lý nghiệp vụ</text><text x="11.00" y="115" font-size="12.21" fill="#000" font-weight="bold">Đặt hàng</text><text x="26.82" y="128" font-size="11.30" fill="#000" font-weight="bold">ncc</text><text x="79.79" y="115" font-size="11.88" fill="#000" font-weight="bold">Mua hàng</text><text x="150.38" y="115" font-size="11.96" fill="#000" font-weight="bold">Trả hàng</text><text x="165.32" y="128" font-size="11.30" fill="#000" font-weight="bold">ncc</text><text x="220.33" y="115" font-size="11.25" fill="#000" font-weight="bold">Báo giá</text><text x="295.32" y="115" font-size="11.41" fill="#000" font-weight="bold">Khách</text><text x="287.51" y="128" font-size="12.18" fill="#000" font-weight="bold">đặt hàng</text><text x="357.30" y="115" font-size="11.61" fill="#000" font-weight="bold">Bán hàng</text><text x="432.32" y="115" font-size="11.41" fill="#000" font-weight="bold">Khách</text><text x="425.88" y="128" font-size="12.39" fill="#000" font-weight="bold">trả hàng</text><text x="488.80" y="115" font-size="11.67" fill="#000" font-weight="bold">Phiếu thu</text><text x="561.81" y="115" font-size="11.47" fill="#000" font-weight="bold">Phiếu chi</text><text x="628.53" y="115" font-size="11.83" fill="#000" font-weight="bold">Chuyển tiền</text><text x="644.81" y="128" font-size="11.43" fill="#000" font-weight="bold">nội bộ</text><text x="710.28" y="115" font-size="11.97" fill="#000" font-weight="bold">Phiếu xuất</text><text x="708.65" y="128" font-size="11.78" fill="#000" font-weight="bold">chuyển kho</text><text x="787.30" y="115" font-size="11.72" fill="#000" font-weight="bold">Phiếu nhập</text><text x="787.15" y="128" font-size="11.69" fill="#000" font-weight="bold">chuyển kho</text><text x="865.50" y="115" font-size="11.55" fill="#000" font-weight="bold">Điều chỉnh tồn</text><text x="958.76" y="115" font-size="12.06" fill="#000" font-weight="bold">Sản xuất</text><text x="1021.31" y="115" font-size="11.57" fill="#000" font-weight="bold">Phiếu thuê đơn</text><text x="1034.00" y="128" font-size="11.95" fill="#000" font-weight="bold">vị thi công</text><text x="520.58" y="148.5" font-size="10.59" fill="#9a9a9a" font-weight="bold">CHỨNG TỪ</text><text x="45.74" y="174" font-size="10.73" fill="#000">Phiếu đặt hàng nhà cung cấp</text><text x="32.15" y="202" font-size="14.93" fill="#0000ff" font-weight="bold">Tạo mới (Ctrl + N)</text><text x="203.05" y="202" font-size="14.90" fill="#0000ff" font-weight="bold">Thêm hàng hóa (F10)</text><text x="398.35" y="202" font-size="14.80" fill="#0000ff" font-weight="bold">Thêm nhân viên (F11)</text><text x="594.75" y="202" font-size="14.16" fill="#0000ff" font-weight="bold">Lưu giao diện</text><text x="725.75" y="202" font-size="14.13" fill="#0000ff" font-weight="bold">Phục hồi giao diện</text><text x="14.16" y="229" font-size="14.49" fill="#000" font-weight="bold">THÔNG TIN ĐẶT HÀNG NHÀ CUNG CẤP</text><text x="6.10" y="259" font-size="13.73" fill="#000">Ngày lập</text><text x="6.13" y="288" font-size="13.43" fill="#000">Mã phiếu</text><text x="6.66" y="317" font-size="13.56" fill="#000">Số phiếu</text><text x="6.15" y="346" font-size="13.12" fill="#000">Người lập</text><text x="20.32" y="377" font-size="13.53" fill="#000">Ghi chú</text><text x="76.05" y="258" font-size="15.00" fill="#000" font-weight="bold" letter-spacing="1.45">09/10/2023</text><text x="75.37" y="287" font-size="14.09" fill="#000">DHN00005-091023</text><text x="76.00" y="345" font-size="13.75" fill="#000">Administrator</text><text x="233.89" y="259" font-size="13.91" fill="#000">Nhà c.cấp</text><text x="235.15" y="288" font-size="14.41" fill="#000">Họ và tên</text><text x="256.00" y="317" font-size="13.10" fill="#000">Địa chỉ</text><text x="233.89" y="346" font-size="13.91" fill="#000">Ngày giao</text><text x="304.54" y="258" font-size="14.27" fill="#000" font-weight="bold">HOANGBAO, VẬT LIỆU QUẢNG CÁO HOÀNG BẢO,</text><text x="305.40" y="287" font-size="12.50" fill="#000">VẬT LIỆU QUẢNG CÁO HOÀNG BẢO</text><text x="446.22" y="346" font-size="14.08" fill="#000">Trạng thái</text><text x="529.51" y="345" font-size="13.73" fill="#000">Chưa nhận</text><text x="1318.73" y="259" font-size="13.26" fill="#000">T Nợ cũ</text><text x="1516.01" y="258" font-size="17.00" fill="#0000ff" font-weight="bold" font-family="Liberation Serif">0</text><text x="1338.45" y="288" font-size="13.72" fill="#000">SĐT</text><text x="1319.96" y="317" font-size="13.02" fill="#000">Loại giá</text><text x="1374.28" y="316" font-size="12.47" fill="#000">Giá lẻ</text><text x="1317.94" y="346" font-size="13.21" fill="#000">N.Viên</text><text x="41.50" y="409" font-size="13.35" fill="#000" font-weight="bold">Hàng hóa</text><text x="389.02" y="409" font-size="13.01" fill="#000" font-weight="bold">Nội dung</text><text x="532.50" y="409" font-size="12.91" fill="#000" font-weight="bold">ĐVT</text><text x="594.62" y="409" font-size="14.71" fill="#000" font-weight="bold">Dài/m</text><text x="689.84" y="409" font-size="14.27" fill="#000" font-weight="bold">Rộng/m</text><text x="794.65" y="409" font-size="12.61" fill="#000" font-weight="bold">Số lượng</text><text x="902.45" y="409" font-size="12.44" fill="#000" font-weight="bold">Khối lượng</text><text x="1034.00" y="409" font-size="12.81" fill="#000" font-weight="bold">Đơn giá</text><text x="1149.37" y="409" font-size="13.44" fill="#000" font-weight="bold">Thành tiền</text><text x="1251.51" y="409" font-size="13.14" fill="#000" font-weight="bold">Kho hàng</text><text x="1370.97" y="409" font-size="13.19" fill="#000" font-weight="bold">Công thức</text><text x="21.88" y="435" font-size="14.00" fill="#000" font-weight="bold" font-family="Liberation Serif">1</text><text x="41.10" y="435" font-size="15.04" fill="#000">B36, Bạt hiflex 3.6zem</text><text x="531.60" y="435" font-size="15.00" fill="#000">m2</text><text x="670.18" y="435" font-size="14.50" fill="#000">1.</text><text x="774.88" y="435" font-size="14.50" fill="#000">1.</text><text x="883.18" y="435" font-size="14.50" fill="#000">2.</text><text x="1013.98" y="435" font-size="14.50" fill="#000">2.</text><text x="1053.84" y="435" font-size="17.00" fill="#ff0000" font-weight="bold" letter-spacing="1.66" font-family="Liberation Serif">100,000.</text><text x="1173.92" y="435" font-size="17.00" fill="#000" font-weight="bold" letter-spacing="1.55" font-family="Liberation Serif">200,000.</text><text x="1252.72" y="435" font-size="13.94" fill="#000">Trụ Sở Chính</text><text x="1370.32" y="435" font-size="14.76" fill="#000">KL x DG</text><text x="14.44" y="461" font-size="14.00" fill="#000" font-weight="bold" font-family="Liberation Serif">2</text><text x="41.10" y="461" font-size="14.94" fill="#000">DCTG+DCT, Decan trong cán decan trắng</text><text x="531.60" y="461" font-size="15.00" fill="#000">m2</text><text x="670.18" y="461" font-size="14.50" fill="#000">1.</text><text x="774.88" y="461" font-size="14.50" fill="#000">1.</text><text x="883.18" y="461" font-size="14.50" fill="#000">5.</text><text x="1013.98" y="461" font-size="14.50" fill="#000">5.</text><text x="1082.14" y="461" font-size="15.15" fill="#000">200,000.</text><text x="1158.24" y="461" font-size="17.00" fill="#000" font-weight="bold" letter-spacing="1.53" font-family="Liberation Serif">1,000,000.</text><text x="1252.72" y="461" font-size="13.94" fill="#000">Trụ Sở Chính</text><text x="1370.32" y="461" font-size="14.76" fill="#000">KL x DG</text><text x="14.58" y="487" font-size="14.00" fill="#000" font-weight="bold" font-family="Liberation Serif">3</text><text x="41.12" y="487" font-size="14.72" fill="#000">BR32, Bạt hiflex in băng rôn</text><text x="531.60" y="487" font-size="15.00" fill="#000">m2</text><text x="670.18" y="487" font-size="14.50" fill="#000">1.</text><text x="774.88" y="487" font-size="14.50" fill="#000">1.</text><text x="883.18" y="487" font-size="14.50" fill="#000">3.</text><text x="1013.98" y="487" font-size="14.50" fill="#000">3.</text><text x="1082.45" y="487" font-size="15.07" fill="#000">300,000.</text><text x="1174.26" y="487" font-size="17.00" fill="#000" font-weight="bold" letter-spacing="1.50" font-family="Liberation Serif">900,000.</text><text x="1252.72" y="487" font-size="13.94" fill="#000">Trụ Sở Chính</text><text x="1370.32" y="487" font-size="14.76" fill="#000">KL x DG</text><text x="14.86" y="513" font-size="14.00" fill="#000" font-weight="bold" font-family="Liberation Serif">4</text><text x="41.10" y="513" font-size="14.94" fill="#000">DCTG+DCT, Decan trong cán decan trắng</text><text x="531.60" y="513" font-size="15.00" fill="#000">m2</text><text x="670.18" y="513" font-size="14.50" fill="#000">1.</text><text x="774.88" y="513" font-size="14.50" fill="#000">1.</text><text x="883.18" y="513" font-size="14.50" fill="#000">1.</text><text x="1013.98" y="513" font-size="14.50" fill="#000">1.</text><text x="1082.45" y="513" font-size="15.07" fill="#000">300,000.</text><text x="1174.09" y="513" font-size="17.00" fill="#000" font-weight="bold" letter-spacing="1.53" font-family="Liberation Serif">300,000.</text><text x="1252.72" y="513" font-size="13.94" fill="#000">Trụ Sở Chính</text><text x="1370.32" y="513" font-size="14.76" fill="#000">KL x DG</text><text x="14.44" y="539" font-size="14.00" fill="#000" font-weight="bold" font-family="Liberation Serif">5</text><text x="41.09" y="539" font-size="15.18" fill="#000">DCT, Decan trắng</text><text x="531.60" y="539" font-size="15.00" fill="#000">m2</text><text x="670.18" y="539" font-size="14.50" fill="#000">1.</text><text x="774.88" y="539" font-size="14.50" fill="#000">1.</text><text x="883.18" y="539" font-size="14.50" fill="#000">1.</text><text x="1013.98" y="539" font-size="14.50" fill="#000">1.</text><text x="1082.60" y="539" font-size="15.03" fill="#000">400,000.</text><text x="1174.43" y="539" font-size="17.00" fill="#000" font-weight="bold" letter-spacing="1.48" font-family="Liberation Serif">400,000.</text><text x="1252.72" y="539" font-size="13.94" fill="#000">Trụ Sở Chính</text><text x="1370.32" y="539" font-size="14.76" fill="#000">KL x DG</text><text x="14.58" y="565" font-size="14.00" fill="#000" font-weight="bold" font-family="Liberation Serif">6</text><text x="41.10" y="565" font-size="15.05" fill="#000">B32, Bạt hiflex 3.2zem</text><text x="531.60" y="565" font-size="15.00" fill="#000">m2</text><text x="670.18" y="565" font-size="14.50" fill="#000">1.</text><text x="774.88" y="565" font-size="14.50" fill="#000">1.</text><text x="883.18" y="565" font-size="14.50" fill="#000">3.</text><text x="1013.98" y="565" font-size="14.50" fill="#000">3.</text><text x="1082.14" y="565" font-size="15.15" fill="#000">700,000.</text><text x="1158.92" y="565" font-size="17.00" fill="#000" font-weight="bold" letter-spacing="1.46" font-family="Liberation Serif">2,100,000.</text><text x="1252.72" y="565" font-size="13.94" fill="#000">Trụ Sở Chính</text><text x="1370.93" y="565" font-size="14.30" fill="#000">SL x DG</text><text x="6.88" y="882" font-size="14.05" fill="#000">% Chiết khấu</text><text x="207.00" y="881" font-size="15.50" fill="#0000ff" font-weight="bold" font-family="Liberation Serif">0.</text><text x="227.13" y="882" font-size="13.67" fill="#000">Tiền chiết khấu</text><text x="1292.01" y="881" font-size="15.50" fill="#0000ff" font-weight="bold" font-family="Liberation Serif">0</text><text x="1311.72" y="882" font-size="13.86" fill="#000">Trọng lượng (Kg)</text><text x="1512.59" y="881" font-size="15.50" fill="#0000ff" font-weight="bold" font-family="Liberation Serif">0.</text><text x="7.02" y="911" font-size="14.24" fill="#000">Tổng cộng</text><text x="147.94" y="911" font-size="15.88" fill="#ff0000" font-weight="bold">4,900,000</text><text x="230.08" y="911" font-size="13.98" fill="#000">Bốn triệu chín trăm nghìn đồng</text><text x="7.30" y="940" font-size="14.09" fill="#000">Đặt cọc</text><text x="210.72" y="939" font-size="15.50" fill="#0000ff" font-weight="bold" font-family="Liberation Serif">0</text><text x="260.44" y="940" font-size="14.10" fill="#000">Quỹ</text><text x="296.23" y="940" font-size="13.69" fill="#000">Tiền mặt</text><text x="1372.42" y="940" font-size="13.64" fill="#000">Còn nợ</text><text x="1516.31" y="939" font-size="15.50" fill="#0000ff" font-weight="bold" font-family="Liberation Serif">0</text><text x="46.32" y="983" font-size="14.70" fill="#0000ff" font-weight="bold">LƯU (F2)</text><text x="156.44" y="983" font-size="15.97" fill="#0000ff" font-weight="bold">IN A4 (F6)</text><text x="278.38" y="983" font-size="15.35" fill="#0000ff" font-weight="bold">IN A4KCN</text><text x="382.00" y="983" font-size="15.49" fill="#000" font-weight="bold">XEM IN</text><text x="482.36" y="983" font-size="14.42" fill="#ff0000" font-weight="bold">THOÁT</text><text x="7.73" y="1031" font-size="11.71" fill="#000" font-weight="bold">Chào mừng: Administrator đến với phần mềm MekongSoft</text><text x="348.04" y="1031" font-size="12.00" fill="#9ab4cc">|</text><text x="363.00" y="1031" font-size="11.59" fill="#000" font-weight="bold">Version: 4.4.0</text><text x="451.04" y="1031" font-size="12.00" fill="#9ab4cc">|</text><text x="464.86" y="1031" font-size="12.27" fill="#ff0000" font-weight="bold">Ngày: 09/10/2023 4:47:40 CH</text><text x="1623.91" y="1032" font-size="11.85" fill="#000" font-weight="bold">@2023 MekongSoft. Thông tin hỗ trợ: 0901 000 508</text><text x="1543.14" y="234" font-size="10.95" fill="#8c8c8c" font-weight="bold">DANH SÁCH PHIẾU</text><text x="1542.92" y="262" font-size="13.87" fill="#000">Từ ngày</text><text x="1752.40" y="262" font-size="13.76" fill="#000">Đến ngày</text><text x="1546.86" y="287" font-size="14.80" fill="#000">01/10/2018</text><text x="1756.06" y="287" font-size="14.80" fill="#000">09/10/2023</text><text x="1541.90" y="317" font-size="13.79" fill="#000">Nhà c.cấp</text><text x="1541.94" y="346" font-size="13.19" fill="#000">Người lập</text><text x="1627.10" y="346" font-size="13.71" fill="#000">Administrator</text><text x="1560.20" y="374" font-size="13.91" fill="#000">Chưa nhận hoặc đang nhận</text><text x="1838.16" y="376" font-size="14.16" fill="#0000ff" font-weight="bold">Tìm kiếm</text><text x="1569.39" y="401" font-size="13.47" fill="#000" font-weight="bold">Ngày lập</text><text x="1660.79" y="401" font-size="13.51" fill="#000" font-weight="bold">Mã phiếu</text><text x="1763.20" y="401" font-size="13.32" fill="#000" font-weight="bold">Nhà cung cấp</text><text x="1569.75" y="457" font-size="15.00" fill="#ff0000" font-weight="bold" letter-spacing="1.19">09/10/20...</text><text x="1660.47" y="457" font-size="14.12" fill="#000">DHN00005-0...</text><text x="1764.00" y="457" font-size="12.71" fill="#000">VẬT LIỆU QUẢNG CÁ...</text><text x="1569.76" y="485" font-size="14.80" fill="#000">09/10/2023</text><text x="1660.47" y="485" font-size="14.12" fill="#000">DHN00004-0...</text><text x="1764.00" y="485" font-size="12.71" fill="#000">VẬT LIỆU QUẢNG CÁ...</text><text x="1569.76" y="513" font-size="14.80" fill="#000">09/10/2023</text><text x="1660.47" y="513" font-size="14.12" fill="#000">DHN00003-0...</text><text x="1764.00" y="513" font-size="12.71" fill="#000">VẬT LIỆU QUẢNG CÁ...</text><text x="1569.76" y="541" font-size="14.80" fill="#000">09/10/2023</text><text x="1660.47" y="541" font-size="14.12" fill="#000">DHN00002-0...</text><text x="1763.37" y="541" font-size="12.60" fill="#000">CỬA HÀNG VẬT LIỆU ...</text><text x="1569.16" y="569" font-size="14.92" fill="#000">14/07/2023</text><text x="1660.47" y="569" font-size="14.12" fill="#000">DHN00001-1...</text><text x="1763.36" y="569" font-size="12.82" fill="#000">CÔNG TY TNHH SẢN ...</text><text x="1679.41" y="913" font-size="14.65" fill="#ff0000" font-weight="bold">Có 5 phiếu</text></svg>
<div class="a" style="left:840px;top:457px;width:241px;height:125px;background:#fff;border:4px solid #707070;"></div>
<div class="a" style="left:844px;top:461px;width:233px;height:25px;background:repeating-linear-gradient(135deg,#ffffff 0px,#ffffff 3.536px,#f1f1f1 3.536px,#f1f1f1 4.243px);"></div>
<div class="a" style="left:844px;top:486px;width:233px;height:1px;background:repeating-linear-gradient(90deg,#606060 0 3px,transparent 3px 6px);"></div>
<svg class="a" style="left:1059px;top:469px;" width="11" height="9" viewBox="0 0 11 9"><path d="M1.5 1.5L9.5 7.5M9.5 1.5L1.5 7.5" stroke="#9a9a9a" stroke-width="2.2"/></svg>
<svg class="a" style="left:856px;top:499px;" width="32" height="32" viewBox="0 0 32 32"><defs><radialGradient id="gQ" cx="35%" cy="30%" r="80%"><stop offset="0" stop-color="#2a7ad0"/><stop offset="1" stop-color="#0a52a8"/></radialGradient></defs><circle cx="16" cy="15.5" r="15" fill="url(#gQ)"/><text x="17" y="25.3" text-anchor="middle" font-size="24" font-family="Liberation Sans" fill="#fff">?</text></svg>
<div class="a" style="left:879px;top:543px;width:75px;height:23px;background:repeating-linear-gradient(135deg,#ffffff 0px,#ffffff 3.536px,#eaeaea 3.536px,#eaeaea 4.243px);border:1px solid #a8a8a8;"></div>
<div class="a" style="left:882px;top:546px;width:69px;height:17px;border:1px solid #000;border-style:dotted;"></div>
<div class="a" style="left:966px;top:543px;width:75px;height:23px;background:repeating-linear-gradient(135deg,#ffffff 0px,#ffffff 3.536px,#eaeaea 3.536px,#eaeaea 4.243px);border:1px solid #b4b4b4;"></div>
<svg class="a" style="left:0;top:0" width="1920" height="1039" font-family="Liberation Sans" xml:space="preserve"><text x="849.00" y="478" font-size="11.56" fill="#000" font-weight="bold">Xác nhận</text><text x="898.45" y="519" font-size="10.64" fill="#000">Bạn có chắc muốn xóa phiếu này ?</text><text x="907.29" y="559" font-size="10.50" fill="#000">Yes</text><text x="995.72" y="559" font-size="11.01" fill="#000">No</text></svg>
<svg class="a" style="left:970px;top:661px;" width="15" height="22" viewBox="0 0 15 22"><path d="M1.5 1.5 V16.5 L5 13 L8 19.5 L10.5 18.5 L7.8 12 L12.5 12 Z" fill="#fff" stroke="#111" stroke-width="1.2" stroke-linejoin="round"/></svg>
</body></html>
